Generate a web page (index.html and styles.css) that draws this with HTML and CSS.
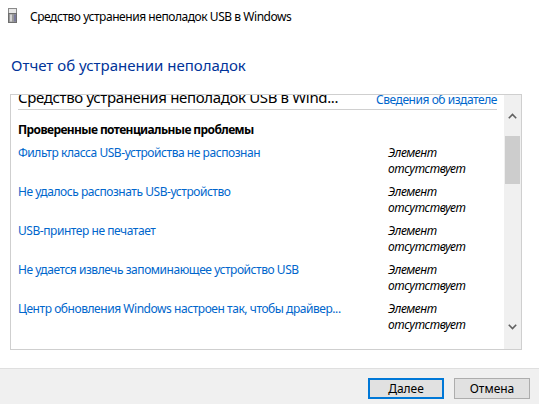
FILE: index.html
```html
<!DOCTYPE html>
<html lang="ru">
<head>
  <meta charset="UTF-8">
  <title>Средство устранения неполадок USB в Windows</title>
  <link rel="stylesheet" href="styles.css">
</head>
<body>
  <div class="window">
    <div class="titlebar">
      <svg class="app-icon" width="9" height="15" viewBox="0 0 9 15">
        <rect x="0.5" y="0.5" width="8" height="5" fill="#e8e8e8" stroke="#8a8a8a"/>
        <rect x="0.5" y="5.5" width="8" height="9" fill="#9a9a9a" stroke="#6e6e6e"/>
        <rect x="2" y="6.5" width="2" height="7" fill="#d4d4d4"/>
        <rect x="6" y="6.5" width="2" height="7" fill="#7a7a9a"/>
      </svg>
      <span class="title">Средство устранения неполадок USB в Windows</span>
    </div>

    <h1 class="heading">Отчет об устранении неполадок</h1>

    <div class="report">
      <div class="report-view">
        <div class="report-content">
          <div class="report-head">
            <span class="report-name">Средство устранения неполадок USB в Wind...</span>
            <a class="publisher" href="#">Сведения об издателе</a>
          </div>
          <div class="section-title">Проверенные потенциальные проблемы</div>
          <div class="issues">
            <a class="issue" href="#">Фильтр класса USB-устройства не распознан</a>
            <span class="status">Элемент<br>отсутствует</span>
            <a class="issue" href="#">Не удалось распознать USB-устройство</a>
            <span class="status">Элемент<br>отсутствует</span>
            <a class="issue" href="#">USB-принтер не печатает</a>
            <span class="status">Элемент<br>отсутствует</span>
            <a class="issue" href="#">Не удается извлечь запоминающее устройство USB</a>
            <span class="status">Элемент<br>отсутствует</span>
            <a class="issue" href="#">Центр обновления Windows настроен так, чтобы драйвер...</a>
            <span class="status">Элемент<br>отсутствует</span>
          </div>
        </div>
      </div>
      <div class="scrollbar">
        <div class="scroll-btn up">
          <svg width="9" height="6" viewBox="0 0 9 6"><path d="M0.8 5.2 L4.5 1.5 L8.2 5.2" fill="none" stroke="#606060" stroke-width="1.6"/></svg>
        </div>
        <div class="scroll-thumb"></div>
        <div class="scroll-track"></div>
        <div class="scroll-btn down">
          <svg width="9" height="6" viewBox="0 0 9 6"><path d="M0.8 0.8 L4.5 4.5 L8.2 0.8" fill="none" stroke="#606060" stroke-width="1.6"/></svg>
        </div>
      </div>
    </div>

    <div class="footer">
      <button class="btn default"><u>Д</u>алее</button>
      <button class="btn">Отмена</button>
    </div>
  </div>
</body>
</html>
```

FILE: styles.css
```css
html, body { margin: 0; padding: 0; }
body { font-family: "Noto Sans", "Open Sans", sans-serif; font-size: 12px; letter-spacing: -0.45px; color: #000; background: #fff; }
.window { width: 539px; height: 404px; display: flex; flex-direction: column; overflow: hidden; }

.titlebar { height: 30px; display: flex; align-items: center; padding: 2px 0 0 8px; box-sizing: border-box; }
.app-icon { display: block; margin-top: -1px; }
.title { margin-left: 13px; font-size: 12px; }

.heading { margin: 25px 0 0 11px; font-size: 15px; letter-spacing: 0; font-weight: normal; color: #003399; line-height: 20px; }

.report { margin: 19px 17px 0 10px; height: 254px; border: 1px solid #cfcfcf; display: flex; }
.report-view { flex: 1; overflow: hidden; }
.report-content { margin-top: -8px; padding: 0 7px; }
.report-head { display: flex; align-items: flex-end; justify-content: space-between; border-bottom: 1px solid #d0d0d0; padding-bottom: 2px; white-space: nowrap; }
.report-name { font-size: 15px; letter-spacing: -0.35px; line-height: 20px; }
.publisher { color: #0066cc; text-decoration: none; font-size: 12px; line-height: 16px; margin-bottom: -1px; }

.section-title { font-weight: bold; letter-spacing: -0.6px; line-height: 16px; margin-top: 12px; }
.issues { display: grid; grid-template-columns: 1fr 109px; row-gap: 7px; margin-top: 7px; }
.issue { color: #0066cc; text-decoration: none; line-height: 16px; align-self: start; white-space: nowrap; }
.status { font-style: italic; line-height: 16px; }

.scrollbar { width: 17px; background: #f0f0f0; display: flex; flex-direction: column; }
.scroll-btn { display: flex; align-items: center; justify-content: center; }
.scroll-btn.up { height: 41px; }
.scroll-btn.down { height: 44px; }
.scroll-thumb { height: 48px; margin: 0 1px; background: #cdcdcd; }
.scroll-track { flex: 1; }

.footer { margin-top: auto; height: 36px; box-sizing: border-box; background: #f0f0f0; border-top: 1px solid #dfdfdf; display: flex; justify-content: flex-end; align-items: flex-start; gap: 10px; padding: 9px 9px 0 0; }
.btn { width: 76px; height: 21px; box-sizing: border-box; background: #e1e1e1; border: 1px solid #adadad; font-family: inherit; font-size: 12px; letter-spacing: 0; color: #000; padding: 0; }
.btn.default { border: 2px solid #0078d7; }
```
